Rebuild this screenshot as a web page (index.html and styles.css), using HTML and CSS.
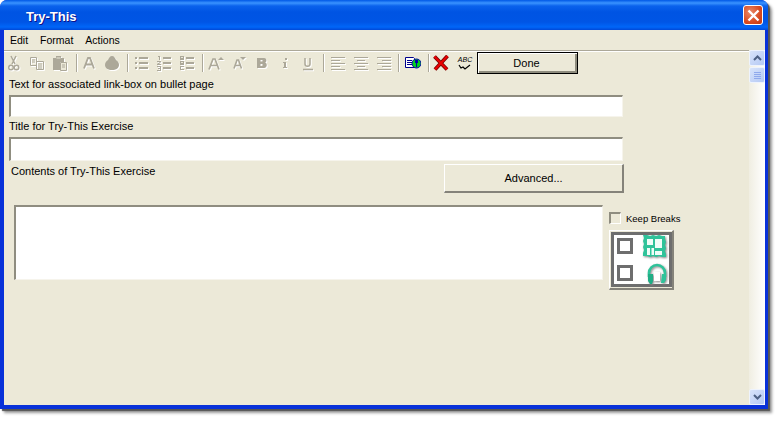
FILE: index.html
```html
<!DOCTYPE html>
<html lang="en">
<head>
<meta charset="utf-8">
<title>Try-This</title>
<link rel="stylesheet" href="styles.css">
</head>
<body>
<div class="window">
  <header class="titlebar">
    <span class="title">Try-This</span>
    <button class="close" aria-label="Close">
      <svg width="13" height="13" viewBox="0 0 13 13"><path d="M1.5 1.5l10 10M11.5 1.5l-10 10" stroke="#fff" stroke-width="2.4" fill="none"/></svg>
    </button>
  </header>
  <div class="client">
    <nav class="menubar"><span>Edit</span><span>Format</span><span>Actions</span></nav>
    <div class="main">
      <div class="form">
        <div class="toolbar">
          <div class="group dis">
            <svg class="ic" viewBox="0 0 16 16"><path d="M5 1l4 8M10 1L6 9" stroke="#aca899" stroke-width="1.5" fill="none"/><circle cx="5" cy="12.5" r="2.3" stroke="#aca899" stroke-width="1.4" fill="none"/><circle cx="10.5" cy="12.5" r="2.3" stroke="#aca899" stroke-width="1.4" fill="none"/></svg>
            <svg class="ic" viewBox="0 0 16 16"><path d="M1.500 2.500h6v8h-6zM7.500 6.500h7v8h-7zM3 5h3M3 7h3M9 9h4M9 11h4M9 13h4" stroke="#aca899" fill="none"/></svg>
            <svg class="ic" viewBox="0 0 16 16"><path d="M1 3h3V1h5v2h3v4H8v8H1z" fill="#aca899"/><path d="M8.500 7.500h6v8h-6zM10 10h3M10 12h3" stroke="#aca899" fill="#ece9d8"/><path d="M4.500 3h4" stroke="#ece9d8"/></svg>
          </div>
          <i class="sep s1"></i>
          <div class="group dis">
            <svg class="ic" viewBox="0 0 16 16"><path d="M3 13.500L7 3h2l4 10.500M5 9.500h6" stroke="#aca899" stroke-width="1.800" fill="none"/></svg>
            <svg class="ic" viewBox="0 0 16 16"><path d="M8 1c2 0 3 2 4 4 2 1 3 3 3 5 0 3-3 5-7 5s-7-2-7-5c0-2 1-4 3-5 1-2 2-4 4-4z" fill="#aca899"/></svg>
          </div>
          <i class="sep s2"></i>
          <div class="group dis">
            <svg class="ic" viewBox="0 0 16 16"><path d="M2 2h2v2H2zM2 7h2v2H2zM2 12h2v2H2zM6 2h9v2H6zM6 7h9v2H6zM6 12h9v2H6z" fill="#aca899"/></svg>
            <svg class="ic" viewBox="0 0 16 16"><path d="M7 2h8v2H7zM7 7h8v2H7zM7 12h8v2H7zM2 1h2v4H3V2H2zM1 6h4v1L3 9h2v1H1V9l3-2H1zM1 11h4v5H1v-1h3v-1H2v-1h2v-1H1z" fill="#aca899"/></svg>
            <svg class="ic" viewBox="0 0 16 16"><path d="M7 2h8v2H7zM7 7h8v2H7zM7 12h8v2H7zM1 1h4v4H1zM1 6h4v4H1zM1 11h4v1H2v2h3v1H1z" fill="#aca899"/><path d="M2 2h2v1H2zM2 7h2v1H2z" fill="#ece9d8"/></svg>
          </div>
          <i class="sep s3"></i>
          <div class="group dis">
            <svg class="ic" viewBox="0 0 16 16"><path d="M1 14.500L5 4h2l4 10.500M3 10.500h6" stroke="#aca899" stroke-width="1.700" fill="none"/><path d="M10 5l3-3 3 3z" fill="#aca899"/></svg>
            <svg class="ic" viewBox="0 0 16 16"><path d="M3 13.500L6 5h1.500l3 8.500M4.500 10.500h4.500" stroke="#aca899" stroke-width="1.600" fill="none"/><path d="M9 2h6l-3 3z" fill="#aca899"/></svg>
            <svg class="ic" viewBox="0 0 16 16"><path d="M3 3h7c3 0 3 4 1 4.500 2.500.5 2.500 5.500-1 5.500H3zM6.500 5v1.500h2V5zM6.500 9v2h2V9z" fill="#aca899" fill-rule="evenodd"/></svg>
            <svg class="ic" viewBox="0 0 16 16"><path d="M8 3h2v2H8zM6 7h3v5h1v1H6v-1h1V8H6z" fill="#aca899"/></svg>
            <svg class="ic" viewBox="0 0 16 16"><path d="M5 3v6c0 3 5 3 5 0V3M3 14.500h10" stroke="#aca899" stroke-width="1.500" fill="none"/></svg>
          </div>
          <i class="sep s4"></i>
          <div class="group dis">
            <svg class="ic" viewBox="0 0 16 16"><path d="M1 2.500h14M1 5.500h9M1 8.500h14M1 11.500h9M1 14.500h14" stroke="#aca899"/></svg>
            <svg class="ic" viewBox="0 0 16 16"><path d="M1 2.500h14M4 5.500h8M1 8.500h14M4 11.500h8M1 14.500h14" stroke="#aca899"/></svg>
            <svg class="ic" viewBox="0 0 16 16"><path d="M1 2.500h14M6 5.500h9M1 8.500h14M6 11.500h9M1 14.500h14" stroke="#aca899"/></svg>
          </div>
          <i class="sep s5"></i>
          <svg class="ic" viewBox="0 0 16 16"><path d="M.5 2.500h8l1 1v9H.5z" fill="#fff" stroke="#00008c"/><path d="M2 5.500h5M2 7.500h5M2 9.500h5" stroke="#00008c"/><circle cx="11.500" cy="8.500" r="4.500" fill="#00d020" stroke="#0000a8"/><path d="M10 5h3v3h-1v4h-1V8h-1z" fill="#0000a8"/></svg>
          <i class="sep s6"></i>
          <svg class="ic" viewBox="0 0 16 16"><path d="M1.500 1.500L14 14.500M14.500 1L2 14.500" stroke="#7a0000" stroke-width="3.800" fill="none"/><path d="M1.500 1.500L14 14.500M14.500 1L2 14.500" stroke="#ea0000" stroke-width="2" fill="none"/></svg>
          <div class="abc"><span>ABC</span><svg width="14" height="6" viewBox="0 0 14 6"><path d="M1 1l2 3 2-1 2 2 5-4" stroke="#000" fill="none" stroke-width="1.200"/></svg></div>
          <button class="done">Done</button>
        </div>
        <label class="label">Text for associated link-box on bullet page</label>
        <input class="field" type="text">
        <label class="label second">Title for Try-This Exercise</label>
        <input class="field tall" type="text">
        <div class="adv-row">
          <span class="contents">Contents of Try-This Exercise</span>
          <button class="advanced">Advanced...</button>
        </div>
        <div class="edit-row">
          <textarea class="area"></textarea>
          <div class="side">
            <div class="keep"><span class="check"></span><span>Keep Breaks</span></div>
            <div class="panel">
              <div class="panel-in">
                <div class="opt">
                  <span class="sq"></span>
                  <svg class="teal" width="25" height="26" viewBox="0 0 25 26"><path d="M0 0h4l3 1 3-1 3 1 3-1 3 1h3v3l1 3-1 3 1 3-1 3 1 3v3h-4l-3-1-3 1-3-1-3 1-3-1H0v-3l1-3-1-3 1-3-1-3 1-3z" fill="#2fc39a"/><path d="M4 4h6v6H4zM12 4h7v9h-7zM4 13h3v7H4zM8.500 13H11v7H8.500zM12 16h7v4h-7z" fill="#f0fdf8"/></svg>
                </div>
                <div class="opt">
                  <span class="sq"></span>
                  <svg class="teal" width="25" height="26" viewBox="0 0 25 26"><path d="M6 15v-4a8 8 0 0 1 16 0v4" stroke="#2fc39a" stroke-width="2.600" fill="none"/><path d="M5 12h5v7l-1 3H7l-2-3z" fill="#1fae85"/><path d="M19 12h4v6l-2 3h-3z" fill="#2fc39a"/><path d="M11 10h6v9h-6z" fill="#fff"/></svg>
                </div>
              </div>
            </div>
          </div>
        </div>
      </div>
      <aside class="scrollbar">
        <span class="sb-btn"><svg width="9" height="6" viewBox="0 0 9 6"><path d="M1 5l3.500-3.500L8 5" stroke="#4d6185" stroke-width="2" fill="none"/></svg></span>
        <span class="sb-thumb"><i></i><i></i><i></i><i></i></span>
        <span class="sb-fill"></span>
        <span class="sb-btn"><svg width="9" height="6" viewBox="0 0 9 6"><path d="M1 1l3.500 3.500L8 1" stroke="#4d6185" stroke-width="2" fill="none"/></svg></span>
      </aside>
    </div>
  </div>
</div>
</body>
</html>
```

FILE: styles.css
```css
* { box-sizing: border-box; }
html, body { margin: 0; padding: 0; background: #fff; }
body { font: 11px/13px "Liberation Sans", Arial, sans-serif; color: #000; width: 779px; height: 422px; overflow: hidden; }

.window {
  width: 768px; height: 409px;
  display: flex; flex-direction: column;
  background: #0831d9;
  border-radius: 7px 7px 0 0;
  box-shadow: 2px 2px 1px #555, 4px 4px 3px #999;
  overflow: hidden;
}
.titlebar {
  height: 30px; flex: none;
  display: flex; align-items: center; justify-content: space-between;
  padding: 0 5px 0 26px;
  background: linear-gradient(#0058e6 0, #3a93ff 3px, #0a62ec 6px, #0054e3 12px, #0055e5 22px, #0066f8 27px, #0048d8 30px);
}
.title { font: bold 13px/16px "Liberation Sans", sans-serif; color: #fff; text-shadow: 1px 1px 0 #0f1089; padding-top: 4px; }
.close {
  width: 20px; height: 20px; padding: 0;
  display: flex; align-items: center; justify-content: center;
  background: radial-gradient(circle at 35% 35%, #e88a6a, #d84a20 60%, #c23a10);
  border: 1px solid #fff; border-radius: 3px;
}
.client {
  flex: 1; min-height: 0;
  margin: 0 3px 4px 4px;
  background: #ece9d8;
  display: flex; flex-direction: column;
}
.menubar { height: 20px; flex: none; display: flex; align-items: center; gap: 12px; padding-left: 6px; font-size: 10.5px; }
.main { flex: 1; min-height: 0; display: flex; }
.form { flex: 1; min-width: 0; border-top: 1px solid #aca899; box-shadow: inset 0 1px 0 #fff; }

.toolbar { height: 23px; display: flex; align-items: center; padding: 1px 0 0 2px; }
.group { display: flex; gap: 7px; }
.ic { width: 16px; height: 16px; display: block; flex: none; }
.dis .ic { filter: drop-shadow(1px 1px 0 #fff); }
.sep { width: 1px; height: 18px; background: #aca899; box-shadow: 1px 0 0 #fff; flex: none; }
.s1 { margin: 0 4px 0 8px; }
.s2 { margin: 0 5px 0 7px; }
.s3 { margin: 0 5px 0 7px; }
.s4 { margin: 0 6px 0 7px; }
.s5 { margin: 0 6px 0 6px; }
.s6 { margin: 0 4px 0 7px; }
.abc { width: 16px; margin-left: 8px; display: flex; flex-direction: column; align-items: center; }
.abc span { font: italic 7px/8px "Liberation Sans", sans-serif; }
.done {
  width: 101px; height: 22px; margin-left: 4px; padding: 0 2px 0 0;
  font: 11px "Liberation Sans", sans-serif; color: #000;
  background: #ece9d8;
  border: 1px solid #000;
  box-shadow: inset 1px 1px 0 #fff, inset -2px -2px 0 #8e8c7e;
}

.label { display: block; margin: 4px 0 0 5px; }
.label.second { margin-top: 3px; }
.field {
  display: block; width: 614px; height: 22px; margin: 4px 0 0 5px; padding: 0;
  background: #fff;
  border-style: solid; border-width: 2px 1px 1px 2px;
  border-color: #8f8d80 #f6f4ec #f6f4ec #8f8d80;
}
.field.tall { height: 24px; }

.adv-row { display: flex; justify-content: space-between; width: 620px; margin-top: 3px; padding-left: 7px; }
.contents { padding-top: 1px; }
.advanced {
  width: 180px; height: 29px; padding: 0;
  font: 11px "Liberation Sans", sans-serif; color: #000;
  background: #ece9d8;
  border-style: solid; border-width: 1px 2px 2px 1px;
  border-color: #fff #85837a #85837a #fff;
}

.edit-row { display: flex; margin: 12px 0 0 10px; }
.area {
  width: 589px; height: 75px; margin: 0; padding: 0; resize: none;
  background: #fff;
  border-style: solid; border-width: 2px 1px 1px 2px;
  border-color: #8f8d80 #f6f4ec #f6f4ec #8f8d80;
}
.side { margin-left: 6px; width: 70px; }
.keep { display: flex; align-items: center; gap: 5px; margin-top: 7px; height: 12px; font-size: 9.5px; white-space: nowrap; }
.check {
  width: 12px; height: 12px; flex: none; background: #ece9d8;
  border-style: solid; border-width: 2px 1px 1px 2px;
  border-color: #8f8d80 #fff #fff #8f8d80;
}
.panel {
  width: 65px; height: 60px; margin-top: 6px;
  border-style: solid; border-width: 1px 2px 2px 1px;
  border-color: #fff #85837a #85837a #fff;
  background: #ece9d8;
}
.panel-in { background: #fff; border: 3px solid #6e6e6e; padding: 0 1px 0 3px; margin: 1px 0 0 1px; height: 55px; }
.opt { height: 27px; display: flex; align-items: flex-start; justify-content: space-between; }
.sq { width: 16px; height: 16px; margin-top: 3px; border: 3px solid #6e6e6e; background: #fff; }
.teal { filter: drop-shadow(1px 1px 1px #888); }

.scrollbar {
  width: 16px; flex: none; display: flex; flex-direction: column;
  background: linear-gradient(90deg, #f0eee2, #fff);
}
.sb-btn, .sb-thumb {
  height: 16px; display: flex; flex-direction: column; align-items: center; justify-content: center; flex: none;
  background: linear-gradient(135deg, #d8e4fb, #b5c9f4);
  border: 1px solid #eef3fd; border-radius: 2px;
}
.sb-thumb { margin-top: 1px; gap: 1px; }
.sb-thumb i { display: block; width: 7px; height: 1px; background: #8fa9ec; }
.sb-fill { flex: 1; }
```
